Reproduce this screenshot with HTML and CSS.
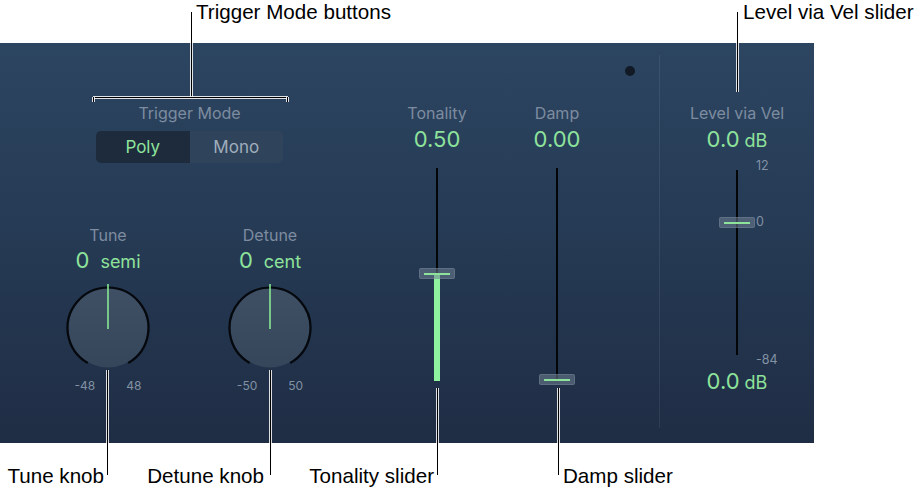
FILE: index.html
```html
<!DOCTYPE html>
<html>
<head>
<meta charset="utf-8">
<link rel="stylesheet" href="styles.css">
</head>
<body>
<div class="page">
  <div class="top-strip">
    <span class="note note-trigger">Trigger Mode buttons</span>
    <span class="note">Level via Vel slider</span>
  </div>

  <div class="panel">
    <div class="left">
      <div class="trigger">
        <div class="label">Trigger Mode</div>
        <div class="seg">
          <span class="seg-on">Poly</span>
          <span class="seg-off">Mono</span>
        </div>
      </div>
      <div class="knobs">
        <div class="knob-col">
          <div class="label">Tune</div>
          <div class="value">0<span class="unit">semi</span></div>
          <svg class="knob" viewBox="0 0 90 90" width="90" height="90">
            <defs>
              <linearGradient id="kg1" x1="0" y1="0" x2="0" y2="1">
                <stop offset="0" stop-color="#3f4f64"/>
                <stop offset="1" stop-color="#35455a"/>
              </linearGradient>
            </defs>
            <circle cx="45" cy="45" r="39.5" fill="url(#kg1)"/>
            <path d="M24.75 80.07 A40.5 40.5 0 1 1 65.25 80.07" fill="none" stroke="#05080c" stroke-width="2.2"/>
            <line x1="45" y1="1" x2="45" y2="46" stroke="#86e894" stroke-width="1.6"/>
          </svg>
          <div class="range"><span>-48</span><span>48</span></div>
        </div>
        <div class="knob-col">
          <div class="label">Detune</div>
          <div class="value">0<span class="unit">cent</span></div>
          <svg class="knob" viewBox="0 0 90 90" width="90" height="90">
            <defs>
              <linearGradient id="kg2" x1="0" y1="0" x2="0" y2="1">
                <stop offset="0" stop-color="#3f4f64"/>
                <stop offset="1" stop-color="#35455a"/>
              </linearGradient>
            </defs>
            <circle cx="45" cy="45" r="39.5" fill="url(#kg2)"/>
            <path d="M24.75 80.07 A40.5 40.5 0 1 1 65.25 80.07" fill="none" stroke="#05080c" stroke-width="2.2"/>
            <line x1="45" y1="1" x2="45" y2="46" stroke="#86e894" stroke-width="1.6"/>
          </svg>
          <div class="range"><span>-50</span><span>50</span></div>
        </div>
      </div>
    </div>

    <div class="fader-col">
      <div class="label">Tonality</div>
      <div class="value big">0.50</div>
      <div class="fader">
        <div class="track"></div>
        <div class="fill" style="top:106px"></div>
        <div class="handle" style="top:100px"><i></i></div>
      </div>
    </div>

    <div class="fader-col damp">
      <div class="label">Damp</div>
      <div class="value big">0.00</div>
      <div class="fader">
        <div class="track"></div>
        <div class="handle" style="top:206px"><i></i></div>
      </div>
    </div>

    <div class="dot-col"><div class="dot"></div></div>
    <div class="sep"></div>

    <div class="fader-col level">
      <div class="label">Level via Vel</div>
      <div class="value big">0.0<span class="unit db">dB</span></div>
      <div class="fader short">
        <div class="track"></div>
        <span class="tick t12">12</span>
        <span class="tick t0">0</span>
        <span class="tick t84">-84</span>
        <div class="handle" style="top:47px"><i></i></div>
      </div>
      <div class="value big bottom-val">0.0<span class="unit db">dB</span></div>
    </div>
  </div>

  <div class="bottom-strip">
    <span class="note right">Tune knob</span>
    <span class="note right">Detune knob</span>
    <span class="note right">Tonality slider</span>
    <span class="note damp-note">Damp slider</span>
  </div>

  <div class="line v l-trigger"></div>
  <div class="line h l-bracket"></div>
  <div class="line v l-tick-a"></div>
  <div class="line v l-tick-b"></div>
  <div class="line v l-level"></div>
  <div class="line v l-tune"></div>
  <div class="line v l-detune"></div>
  <div class="line v l-tonality"></div>
  <div class="line v l-damp"></div>
</div>
</body>
</html>
```

FILE: styles.css
```css
* { box-sizing: border-box; }
html, body { margin: 0; padding: 0; background: #fff; }
.page {
  position: relative;
  width: 924px;
  height: 494px;
  overflow: hidden;
  font-family: "Inter", "Noto Sans", sans-serif;
}
.note {
  font-family: "Liberation Sans", Arial, sans-serif;
  font-size: 20.6px;
  line-height: 23px;
  color: #000;
  white-space: nowrap;
}
.top-strip {
  height: 43px;
  display: flex;
  padding-left: 196px;
}
.note-trigger { width: 547px; }

.panel {
  display: flex;
  width: 814px;
  height: 400px;
  background: linear-gradient(180deg, #2c4561 0%, #263b55 45%, #1f2d44 100%);
}
.label {
  font-size: 16px;
  line-height: 18px;
  color: #7d8ca0;
  text-align: center;
  white-space: nowrap;
}
.value {
  font-size: 22px;
  line-height: 26px;
  color: #8ee39b;
  text-align: center;
  white-space: nowrap;
  margin-top: 3px;
}
.value .unit { font-size: 18px; margin-left: 11px; }
.value .unit.db { font-size: 18px; margin-left: 5px; }

.left {
  width: 397px;
  padding-top: 61px;
  display: flex;
  flex-direction: column;
}
.trigger {
  margin-left: 96px;
  width: 187px;
  display: flex;
  flex-direction: column;
}
.seg {
  margin-top: 9px;
  height: 32px;
  display: flex;
  border-radius: 5px;
  overflow: hidden;
}
.seg span {
  flex: 1;
  display: flex;
  align-items: center;
  justify-content: center;
  font-size: 17px;
}
.seg-on { background: #1d2b3d; color: #8ee39b; }
.seg-off { background: #2f445b; color: #a0adbc; }

.knobs {
  display: flex;
  gap: 62px;
  padding-left: 58px;
  margin-top: 63px;
}
.knob-col {
  width: 100px;
  display: flex;
  flex-direction: column;
  align-items: center;
}
.knob { display: block; margin-top: 8px; }
.range {
  margin-top: 6px;
  display: flex;
  justify-content: center;
  gap: 31px;
  font-size: 12px;
  line-height: 14px;
  color: #8291a4;
}

.fader-col {
  width: 80px;
  padding-top: 61px;
  display: flex;
  flex-direction: column;
  align-items: center;
}
.fader-col .value { margin-top: 4px; }
.fader-col.damp { margin-left: 40px; }
.fader-col.level { width: 100px; margin-left: 27px; }
.fader {
  position: relative;
  margin-top: 16px;
  width: 40px;
  height: 213px;
  display: flex;
  justify-content: center;
}
.fader.short { height: 185px; }
.track { width: 2px; height: 100%; background: #030507; }
.fill {
  position: absolute;
  left: 17px;
  width: 6px;
  bottom: 0;
  background: #8ff29f;
}
.handle {
  position: absolute;
  left: 2px;
  width: 36px;
  height: 11px;
  border-radius: 2px;
  background: rgba(112, 128, 146, 0.55);
  box-shadow: inset 0 0 0 1px rgba(150, 165, 180, 0.25);
  display: flex;
  align-items: center;
  justify-content: center;
}
.handle i {
  display: block;
  width: 26px;
  height: 2px;
  background: #8ee39b;
}
.tick {
  position: absolute;
  left: 39px;
  font-size: 12.5px;
  line-height: 14px;
  color: #8291a4;
}
.t12 { top: -11px; }
.t0 { top: 45px; }
.t84 { top: 183px; }
.bottom-val { margin-top: 13px !important; }

.dot-col {
  width: 62px;
  padding-top: 23px;
  padding-left: 28px;
}
.dot {
  width: 10px;
  height: 10px;
  border-radius: 50%;
  background: #111a25;
}
.sep {
  width: 1px;
  margin: 12px 0 15px;
  background: rgba(255, 255, 255, 0.07);
}

.bottom-strip {
  display: grid;
  grid-template-columns: 104px 160px 170px auto;
  padding-top: 21px;
}
.bottom-strip .right { text-align: right; }
.damp-note { margin-left: 129px; }

.line {
  position: absolute;
  background: #000;
}
.line.v { width: 1px; box-shadow: 1px 0 0 rgba(255,255,255,0.85), -1px 0 0 rgba(255,255,255,0.85); }
.line.h { height: 1px; box-shadow: 0 1px 0 rgba(255,255,255,0.85), 0 -1px 0 rgba(255,255,255,0.85); }
.l-trigger { left: 191px; top: 12px; height: 85px; }
.l-bracket { left: 93px; top: 97px; width: 195px; }
.l-tick-a { left: 93px; top: 97px; height: 5px; }
.l-tick-b { left: 287px; top: 97px; height: 5px; }
.l-level { left: 737px; top: 12px; height: 80px; }
.l-tune { left: 107px; top: 370px; height: 105px; }
.l-detune { left: 270px; top: 370px; height: 105px; }
.l-tonality { left: 437px; top: 388px; height: 87px; }
.l-damp { left: 558px; top: 388px; height: 87px; }
```
